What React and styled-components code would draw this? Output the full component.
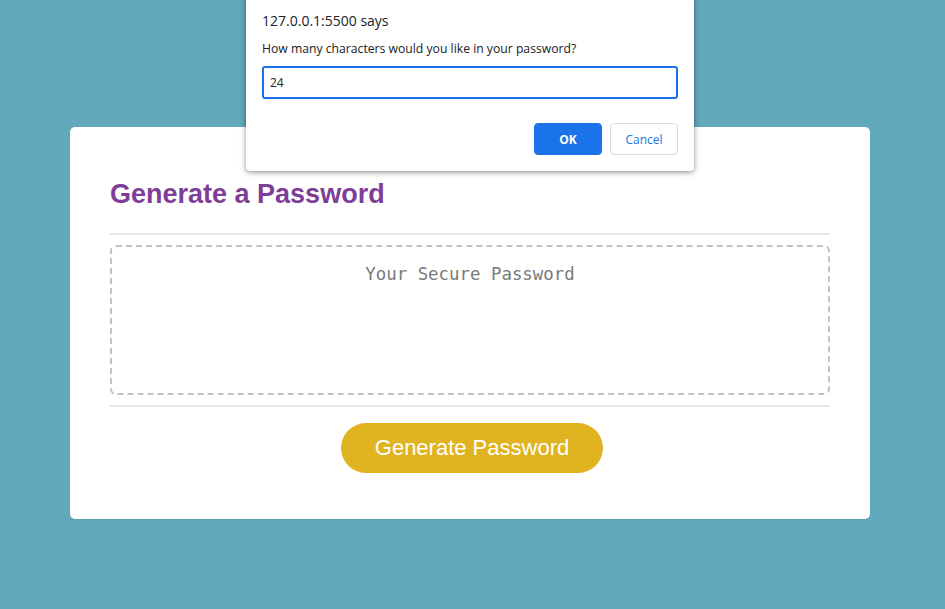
import React from 'react';
import styled, { createGlobalStyle } from 'styled-components';

const GlobalStyle = createGlobalStyle`
    html, body {
        margin: 0;
        padding: 0;
        height: 100%;
        background-color: #62a9bb;
        font-family: "Liberation Sans", Arial, sans-serif;
    }
`

class App extends React.Component {

    renderDialog() {
        return (
            <Dialog>
                <DialogTitle>127.0.0.1:5500 says</DialogTitle>
                <DialogMessage>How many characters would you like in your password?</DialogMessage>
                <DialogInput defaultValue="24" readOnly />
                <DialogActions>
                    <DialogButton primary>OK</DialogButton>
                    <DialogButton>Cancel</DialogButton>
                </DialogActions>
            </Dialog>
        );
    }

    render() {
        return (
            <Page>
                <GlobalStyle />
                <Card>
                    <CardHeader>
                        <Title>Generate a Password</Title>
                    </CardHeader>
                    <CardBody>
                        <PasswordBox
                            readOnly
                            placeholder="Your Secure Password"
                            aria-label="Generated Password"
                        />
                    </CardBody>
                    <CardFooter>
                        <GenerateButton>Generate Password</GenerateButton>
                    </CardFooter>
                </Card>
                {this.renderDialog()}
            </Page>
        );
    }
}

const Page = styled.div`
    position: relative;
    min-height: 609px;
    padding: 127px 0 0 70px;
    box-sizing: border-box;
`
const Card = styled.div`
    width: 800px;
    box-sizing: border-box;
    background: #ffffff;
    border-radius: 5px;
    padding: 0 40px 46px;
    box-shadow: 0 1px 2px rgba(0, 0, 0, 0.08);
`
const CardHeader = styled.div`
    padding: 53px 0 25px;
    border-bottom: 2px solid #e8e8e8;
`
const Title = styled.h2`
    margin: 0;
    font-family: "Liberation Sans", Arial, sans-serif;
    font-size: 27px;
    line-height: 28px;
    font-weight: bold;
    color: #7e3e98;
`
const CardBody = styled.div`
    padding: 10px 0 10px;
    border-bottom: 2px solid #e8e8e8;
`
const PasswordBox = styled.textarea`
    display: block;
    width: 100%;
    height: 150px;
    box-sizing: border-box;
    border: 2px dashed #c0c4ca;
    border-radius: 6px;
    padding: 16px 20px;
    resize: none;
    outline: none;
    text-align: center;
    font-family: "DejaVu Sans Mono", monospace;
    font-size: 17.4px;
    line-height: 22px;
    color: #555;
    &::placeholder {
        color: #7a7a7a;
    }
`
const CardFooter = styled.div`
    display: flex;
    justify-content: center;
    padding: 16px 0 0 4px;
`
const GenerateButton = styled.button`
    width: 262px;
    height: 50px;
    border: none;
    border-radius: 25px;
    background-color: #e0b320;
    color: #ffffff;
    font-family: "Liberation Sans", Arial, sans-serif;
    font-size: 22px;
    cursor: pointer;
`

const Dialog = styled.div`
    position: absolute;
    top: -4px;
    left: 246px;
    width: 448px;
    box-sizing: border-box;
    background: #ffffff;
    border-radius: 4px;
    padding: 15px 16px 16px;
    box-shadow: 0 1px 4px rgba(0, 0, 0, 0.35), 0 2px 8px rgba(0, 0, 0, 0.15);
    font-family: "Open Sans", "Noto Sans", sans-serif;
    color: #202124;
`
const DialogTitle = styled.div`
    font-size: 14px;
    line-height: 20px;
`
const DialogMessage = styled.div`
    margin-top: 10px;
    font-size: 12.2px;
    line-height: 16px;
`
const DialogInput = styled.input`
    display: block;
    margin-top: 9px;
    width: 100%;
    height: 33px;
    box-sizing: border-box;
    border: 2px solid #1a73e8;
    border-radius: 3px;
    padding: 0 6px;
    font-family: "Open Sans", "Noto Sans", sans-serif;
    font-size: 12px;
    color: #202124;
    outline: none;
`
const DialogActions = styled.div`
    display: flex;
    justify-content: flex-end;
    gap: 8px;
    margin-top: 24px;
`
const DialogButton = styled.button`
    width: 68px;
    height: 32px;
    box-sizing: border-box;
    border-radius: 4px;
    font-family: "Open Sans", "Noto Sans", sans-serif;
    font-size: 12px;
    font-weight: ${props => props.primary ? 'bold' : 'normal'};
    background: ${props => props.primary ? '#1a73e8' : '#ffffff'};
    color: ${props => props.primary ? '#ffffff' : '#1a73e8'};
    border: 1px solid ${props => props.primary ? '#1a73e8' : '#dadce0'};
    cursor: pointer;
`

export default App;
